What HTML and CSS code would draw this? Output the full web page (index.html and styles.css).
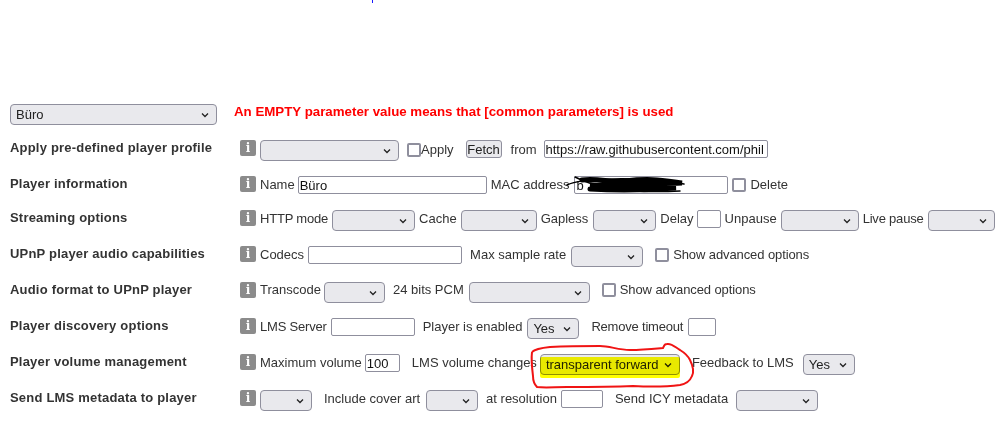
FILE: index.html
```html
<!DOCTYPE html>
<html lang="en">
<head>
<meta charset="utf-8">
<title>Player settings</title>
<link rel="stylesheet" href="styles.css">
</head>
<body>
<span class="speck"></span>
<main class="form">
  <div class="row head">
    <select class="sel w207"><option>Büro</option></select>
    <strong class="warn">An EMPTY parameter value means that [common parameters] is used</strong>
  </div>

  <div class="row">
    <h2 class="label">Apply pre-defined player profile</h2>
    <div class="fields">
      <span class="info">i</span>
      <select class="sel w139"><option></option></select>
      <input class="check ml4 cb-low" type="checkbox"><span class="txt low">Apply</span>
      <button class="btn ml8">Fetch</button>
      <span class="txt ml5 mid">from</span>
      <input class="inp w224 ml3" type="text" value="https://raw.githubusercontent.com/phil">
    </div>
  </div>

  <div class="row short">
    <h2 class="label">Player information</h2>
    <div class="fields">
      <span class="info">i</span>
      <span class="txt n1">Name</span>
      <input class="inp w189" type="text" value="Büro">
      <span class="txt p1">MAC address</span>
      <input class="inp w154" type="text" value="b">
      <input class="check" type="checkbox"><span class="txt">Delete</span>
    </div>
  </div>

  <div class="row">
    <h2 class="label">Streaming options</h2>
    <div class="fields">
      <span class="info">i</span>
      <span class="txt n2">HTTP mode</span>
      <select class="sel w83"><option></option></select>
      <span class="txt">Cache</span>
      <select class="sel w76"><option></option></select>
      <span class="txt p1">Gapless</span>
      <select class="sel w63"><option></option></select>
      <span class="txt n1">Delay</span>
      <input class="inp w24" type="text">
      <span class="txt">Unpause</span>
      <select class="sel w78"><option></option></select>
      <span class="txt n2">Live pause</span>
      <select class="sel w67"><option></option></select>
    </div>
  </div>

  <div class="row">
    <h2 class="label">UPnP player audio capabilities</h2>
    <div class="fields">
      <span class="info">i</span>
      <span class="txt">Codecs</span>
      <input class="inp w154" type="text">
      <span class="txt ml4 p1">Max sample rate</span>
      <select class="sel w72"><option></option></select>
      <input class="check ml8" type="checkbox"><span class="txt tight">Show advanced options</span>
    </div>
  </div>

  <div class="row">
    <h2 class="label">Audio format to UPnP player</h2>
    <div class="fields">
      <span class="info">i</span>
      <span class="txt high n1">Transcode</span>
      <select class="sel w61"><option></option></select>
      <span class="txt high ml4 p1">24 bits PCM</span>
      <select class="sel w121"><option></option></select>
      <input class="check ml8 cb-high" type="checkbox"><span class="txt high tight">Show advanced options</span>
    </div>
  </div>

  <div class="row">
    <h2 class="label">Player discovery options</h2>
    <div class="fields">
      <span class="info">i</span>
      <span class="txt n2">LMS Server</span>
      <input class="inp w84" type="text">
      <span class="txt ml4 p1">Player is enabled</span>
      <select class="sel w52"><option>Yes</option></select>
      <span class="txt ml8 n2 p1">Remove timeout</span>
      <input class="inp w28" type="text">
    </div>
  </div>

  <div class="row">
    <h2 class="label">Player volume management</h2>
    <div class="fields">
      <span class="info">i</span>
      <span class="txt n1">Maximum volume</span>
      <input class="inp w35" type="text" value="100">
      <span class="txt ml8 n1">LMS volume changes</span>
      <select class="sel w140"><option>transparent forward</option></select>
      <span class="txt ml8 p5">Feedback to LMS</span>
      <select class="sel w52"><option>Yes</option></select>
    </div>
  </div>

  <div class="row">
    <h2 class="label">Send LMS metadata to player</h2>
    <div class="fields">
      <span class="info">i</span>
      <select class="sel w52"><option></option></select>
      <span class="txt ml8 p2">Include cover art</span>
      <select class="sel w52"><option></option></select>
      <span class="txt ml4">at resolution</span>
      <input class="inp w42" type="text">
      <span class="txt ml8 p4">Send ICY metadata</span>
      <select class="sel w82"><option></option></select>
    </div>
  </div>
</main>

<svg class="marks" width="1006" height="422" viewBox="0 0 1006 422" aria-hidden="true">
  <path class="scribble" d="M582 180 C600 178 610 183 625 181 C650 178 660 180 682 183 C650 184 620 186 590 185 C610 187 640 187 676 188 C650 190 620 191 590 189"/>
  <path class="scribble thin" d="M567 185 C580 178 640 176 684 184 M575 177 C600 190 640 193 680 191"/>
  <path class="loop" d="M532 352 C535 349 540 348 550 347 C570 346 585 346 600 346 C610 346 618 350 630 350 C642 350 652 349 663 348 C664 346 664 344 667 344 C672 343 676 348 680 350 C685 353 688 356 690 360 C693 366 694 372 692 376 C690 381 686 384 680 385 C665 387 650 387 633 386 C610 387 590 387 567 387 C555 387 545 388 537 387 C534 384 533 380 533 376 C532 368 531 360 532 352"/>
</svg>
<span class="marker"></span>
</body>
</html>
```
FILE: styles.css
```css
* { box-sizing: border-box; }
html, body { margin: 0; background: #fff; }
body {
  position: relative;
  width: 1006px;
  height: 422px;
  overflow: hidden;
  font: 13px/18px "Liberation Sans", Arial, sans-serif;
  color: #333;
}
.form { padding-top: 104px; }
.row { display: flex; align-items: flex-start; height: 36px; }
.row.short { height: 34px; }
.row.head { gap: 17px; padding-left: 10px; }
.warn { font-size: 13.3px; line-height: 16px; color: #f00; }
.label {
  width: 240px;
  margin: 0;
  padding: 0 0 0 10px;
  font-size: 13px;
  font-weight: bold;
  line-height: 15px;
  letter-spacing: .2px;
}
.fields { display: flex; align-items: flex-start; gap: 4px; }
.info {
  width: 16px;
  height: 16px;
  border-radius: 2px;
  background: #8b8b8b;
  color: #fff;
  font: bold 12px/16px "DejaVu Serif", serif;
  text-align: center;
}
.txt { white-space: nowrap; }
.txt.low { margin-left: -4px; padding-top: 1px; }
.txt.mid { padding-top: 1px; }
.txt.high { margin-top: -1px; }
.txt.tight { letter-spacing: -.1px; }
.sel {
  appearance: none;
  height: 21px;
  padding: 0 20px 0 5px;
  border: 1px solid #8f8f9d;
  border-radius: 4px;
  color: #222;
  font: 13px "Liberation Sans", Arial, sans-serif;
  background: #e9e9ed url("data:image/svg+xml,%3Csvg xmlns='http://www.w3.org/2000/svg' width='8' height='6'%3E%3Cpath d='M1 1.5l3 3 3-3' fill='none' stroke='%23222' stroke-width='1.3'/%3E%3C/svg%3E") no-repeat right 7px center;
}
.inp {
  height: 18px;
  padding: 0 1px;
  border: 1px solid #8f8f9d;
  border-radius: 2px;
  background: #fff;
  color: #111;
  font: 13px "Liberation Sans", Arial, sans-serif;
}
.check {
  appearance: none;
  width: 14px;
  height: 14px;
  margin: 2px 0 0;
  border: 2px solid #8f8f9d;
  border-radius: 2px;
  background: #fff;
}
.check.cb-low { margin-top: 3px; }
.check.cb-high { margin-top: 1px; }
.btn {
  height: 18px;
  width: 36px;
  padding: 0;
  border: 1px solid #8f8f9d;
  border-radius: 3px;
  background: #e9e9ed;
  color: #222;
  font: 13px "Liberation Sans", Arial, sans-serif;
}
.ml3 { margin-left: 3px; }
.ml4 { margin-left: 4px; }
.ml5 { margin-left: 5px; }
.ml8 { margin-left: 8px; }
.n1 { margin-right: -1px; }
.n2 { letter-spacing: -.2px; }
.p1 { margin-right: 1px; }
.p2 { margin-right: 2px; }
.p4 { margin-right: 4px; }
.p5 { margin-right: 5px; }
.w24 { width: 24px; }
.w28 { width: 28px; }
.w35 { width: 35px; }
.w42 { width: 42px; }
.w52 { width: 52px; }
.w61 { width: 61px; }
.w63 { width: 63px; }
.w67 { width: 67px; }
.w72 { width: 72px; }
.w76 { width: 76px; }
.w78 { width: 78px; }
.w82 { width: 82px; }
.w83 { width: 83px; }
.w84 { width: 84px; }
.w121 { width: 121px; }
.w139 { width: 139px; }
.w140 { width: 140px; }
.w154 { width: 154px; }
.w189 { width: 189px; }
.w207 { width: 207px; }
.w224 { width: 224px; }
.speck { position: absolute; left: 372px; top: 0; width: 1px; height: 3px; background: #1a1aff; }
.marks { position: absolute; left: 0; top: 0; pointer-events: none; }
.scribble { fill: none; stroke: #000; stroke-width: 5; stroke-linecap: round; }
.scribble.thin { stroke-width: 1.5; }
.loop { fill: none; stroke: #f01414; stroke-width: 2; stroke-linejoin: round; }
.marker {
  position: absolute;
  left: 540px;
  top: 357px;
  width: 140px;
  height: 21px;
  background: #ff0;
  mix-blend-mode: multiply;
  border-radius: 2px;
}
```
